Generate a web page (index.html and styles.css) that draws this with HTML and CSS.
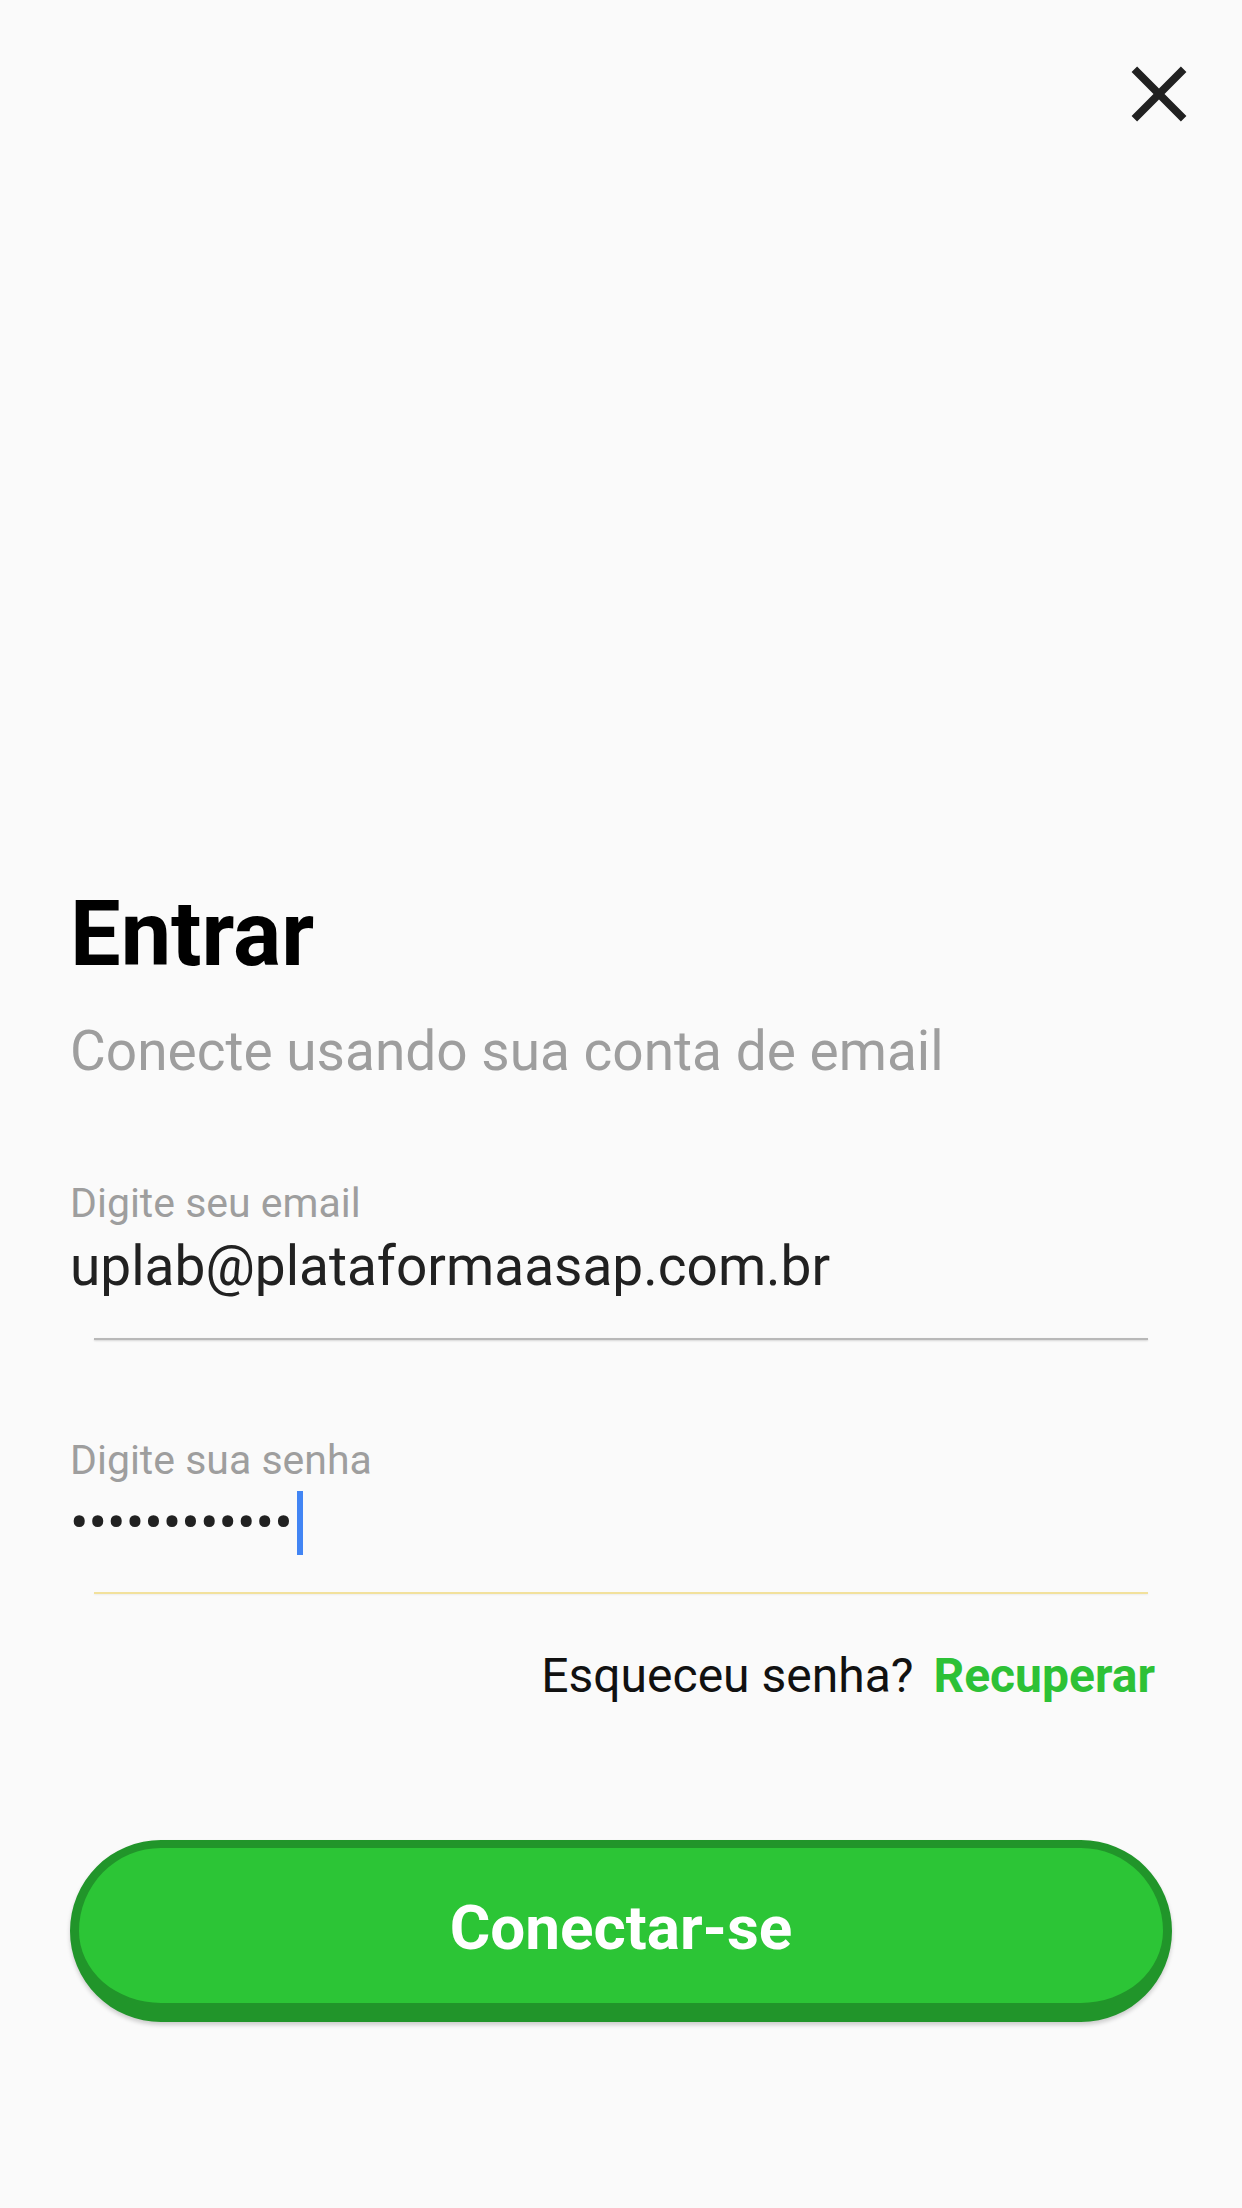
FILE: index.html
```html
<!DOCTYPE html>
<html lang="pt-BR">
<head>
    <meta charset="UTF-8">
    <meta name="viewport" content="width=device-width, initial-scale=1.0">
    <title>Entrar</title>
    <link rel="stylesheet" href="styles.css">
</head>
<body>
    <header class="top-bar">
        <button class="close-button" aria-label="Fechar">
            <svg viewBox="0 0 24 24" width="94" height="94">
                <path d="M19 6.41L17.59 5 12 10.59 6.41 5 5 6.41 10.59 12 5 17.59 6.41 19 12 13.41 17.59 19 19 17.59 13.41 12z" fill="#212121"/>
            </svg>
        </button>
    </header>

    <main class="login">
        <h1>Entrar</h1>
        <p class="subtitle">Conecte usando sua conta de email</p>

        <form id="loginForm">
            <div class="field">
                <label class="field-label">Digite seu email</label>
                <div class="field-value">uplab@plataformaasap.com.br</div>
            </div>
            <div class="divider"></div>

            <div class="field field-password">
                <label class="field-label">Digite sua senha</label>
                <div class="field-value"><span class="dots">••••••••••••</span><span class="caret"></span></div>
            </div>
            <div class="divider divider-active"></div>

            <div class="forgot">
                <span>Esqueceu senha?</span>
                <a href="#">Recuperar</a>
            </div>

            <button type="submit" class="submit-button">Conectar-se</button>
        </form>
    </main>
</body>
</html>
```

FILE: styles.css
```css
/* Base styles */
body {
    font-family: Roboto, 'Noto Sans', sans-serif;
    background-color: #fafafa;
    margin: 0;
    padding: 0 70px;
    min-height: 100vh;
    box-sizing: border-box;
}

.top-bar {
    display: flex;
    justify-content: flex-end;
    padding-top: 47px;
    margin-right: -34px;
}

.close-button {
    background: none;
    border: none;
    padding: 0;
    width: 94px;
    height: 94px;
    cursor: pointer;
}

.close-button svg {
    display: block;
}

.login {
    margin-top: 744px;
}

h1 {
    margin: 0;
    font-size: 90px;
    line-height: 100px;
    font-weight: 700;
    color: #000;
}

.subtitle {
    margin: 34px 0 0;
    font-size: 55px;
    line-height: 64px;
    color: #9e9e9e;
}

/* Fields */
.field {
    margin-top: 95px;
}

.field-label {
    display: block;
    font-size: 41px;
    line-height: 50px;
    color: #9e9e9e;
}

.field-value {
    margin-top: 6px;
    font-size: 55px;
    line-height: 64px;
    height: 64px;
    color: #212121;
}

.caret {
    display: inline-block;
    vertical-align: top;
    width: 6px;
    height: 64px;
    margin-left: 4px;
    background-color: #4285f4;
}

.divider {
    height: 2px;
    margin: 40px 24px 0;
    background-color: #b8b8b8;
    box-shadow: 0 1px 2px rgba(0, 0, 0, 0.15);
}

.divider-active {
    margin-top: 37px;
    background-color: #f2e19c;
    box-shadow: 0 1px 2px rgba(0, 0, 0, 0.06);
}

.forgot {
    display: flex;
    justify-content: flex-end;
    gap: 20px;
    margin: 54px 17px 0 0;
    font-size: 48px;
    line-height: 56px;
    color: #111;
}

.forgot a {
    color: #2dc136;
    font-weight: 700;
    text-decoration: none;
}

/* Main button */
.submit-button {
    display: block;
    width: 100%;
    height: 182px;
    margin-top: 136px;
    padding: 3px 0 0;
    background-color: #2cc536;
    border: 9px solid #21952a;
    border-top-width: 8px;
    border-bottom-width: 19px;
    border-radius: 91px;
    box-shadow: 0 3px 4px rgba(0, 0, 0, 0.18);
    box-sizing: border-box;
    font-family: Roboto, sans-serif;
    font-size: 62px;
    font-weight: 700;
    color: #fff;
    cursor: pointer;
}
```
